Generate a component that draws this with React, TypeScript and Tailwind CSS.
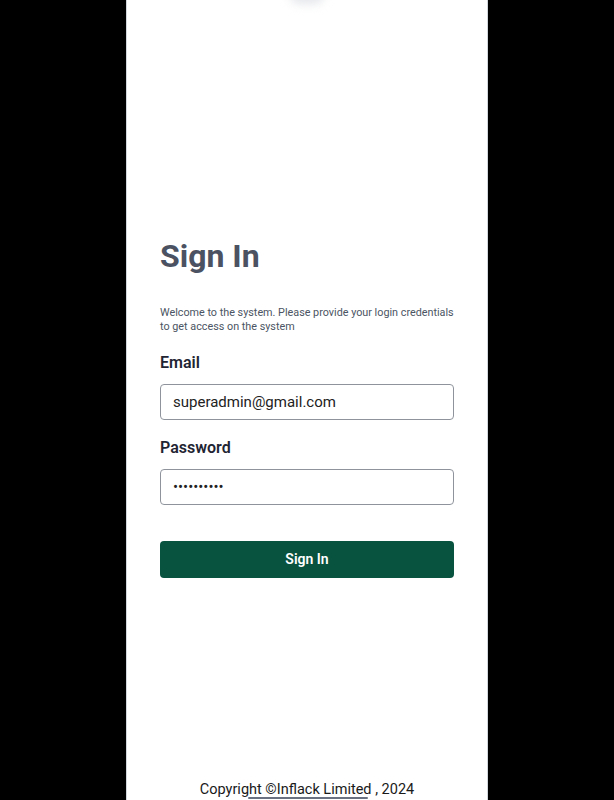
import { useState } from "react";

export default function App() {
  const [email, setEmail] = useState("superadmin@gmail.com");
  const [password, setPassword] = useState("1234567890");

  return (
    <div className="flex h-[800px] w-full justify-center overflow-hidden bg-black font-['Roboto',sans-serif]">
      <div className="relative flex h-full w-[362px] flex-col border-x border-gray-300 bg-white">
        {/* faint shadow of something cut off at the top */}
        <div className="absolute left-1/2 top-[-14px] h-[18px] w-[34px] -translate-x-1/2 rounded-full bg-gray-200 blur-[5px]" />

        <div className="px-[33px] pt-[236px]">
          <h1 className="text-[32px] font-bold leading-[40px] text-[#4b5262]">Sign In</h1>
          <p className="mt-[30px] text-[10.8px] leading-[14px] text-[#4b5563]">
            Welcome to the system. Please provide your login credentials to get access on the system
          </p>

          <label className="mt-[19px] block text-[16px] font-semibold leading-[20px] text-[#1f2533]">Email</label>
          <input
            value={email}
            onChange={(e) => setEmail(e.target.value)}
            className="mt-[11px] h-[36px] w-full rounded-[4px] border border-[#8f949c] px-3 text-[15px] text-[#222] outline-none"
          />

          <label className="mt-[18px] block text-[16px] font-semibold leading-[20px] text-[#1f2533]">Password</label>
          <input
            type="password"
            value={password}
            onChange={(e) => setPassword(e.target.value)}
            className="mt-[11px] h-[36px] w-full rounded-[4px] border border-[#8f949c] px-3 text-[15px] text-[#222] outline-none"
          />

          <button className="mt-[36px] h-[37px] w-full rounded-[4px] bg-[#07533f] text-[14px] font-semibold text-white">
            Sign In
          </button>
        </div>

        <div className="relative mt-auto pb-[1px] text-center text-[14.5px] leading-[18px] text-[#1a1a1a]">
          Copyright ©Inflack Limited , 2024
          <div className="absolute bottom-[1px] left-[121px] h-[2px] w-[120px] rounded-full bg-gray-500" />
        </div>
      </div>
    </div>
  );
}
